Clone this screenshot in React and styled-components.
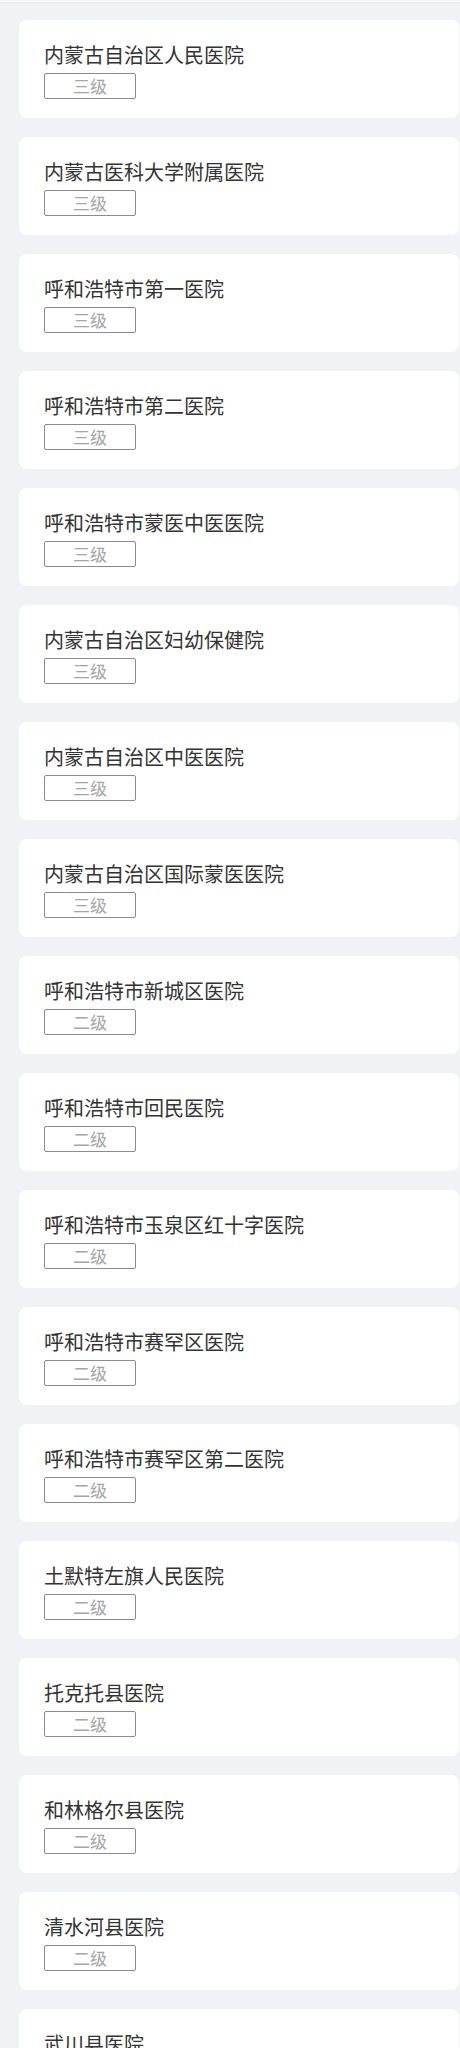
import React from "react";
import styled, { createGlobalStyle } from "styled-components";

const GlobalStyle = createGlobalStyle`
  html, body {
    margin: 0;
    padding: 0;
    background: #eff3f6;
  }
  body {
    font-family: "Noto Sans CJK SC", "Noto Sans", sans-serif;
  }
`;

const Page = styled.div`
  width: 460px;
  min-height: 2048px;
  background: #eff3f6;
  overflow: hidden;
`;

const TopEdge = styled.div`
  height: 2px;
  background: #f6f8fa;
  border-bottom: 1px solid #e8edf1;
`;

const List = styled.div`
  display: flex;
  flex-direction: column;
  gap: 19px;
  padding: 17px 1px 0 19px;
`;

const Card = styled.div`
  background: #ffffff;
  border-radius: 8px;
  padding: 21px 25px 19px 25px;
  height: 98px;
  box-sizing: border-box;
  display: flex;
  flex-direction: column;
  align-items: flex-start;
`;

const Title = styled.div`
  font-size: 20px;
  line-height: 28px;
  color: #333333;
  white-space: nowrap;
`;

const Level = styled.div`
  margin-top: 4px;
  width: 92px;
  height: 26px;
  box-sizing: border-box;
  border: 1px solid #8c8c8c;
  border-radius: 2px;
  display: flex;
  align-items: center;
  justify-content: center;
  font-size: 17px;
  line-height: 24px;
  color: #a6a6a6;
`;

const hospitals = [
  ["内蒙古自治区人民医院", "三级"],
  ["内蒙古医科大学附属医院", "三级"],
  ["呼和浩特市第一医院", "三级"],
  ["呼和浩特市第二医院", "三级"],
  ["呼和浩特市蒙医中医医院", "三级"],
  ["内蒙古自治区妇幼保健院", "三级"],
  ["内蒙古自治区中医医院", "三级"],
  ["内蒙古自治区国际蒙医医院", "三级"],
  ["呼和浩特市新城区医院", "二级"],
  ["呼和浩特市回民医院", "二级"],
  ["呼和浩特市玉泉区红十字医院", "二级"],
  ["呼和浩特市赛罕区医院", "二级"],
  ["呼和浩特市赛罕区第二医院", "二级"],
  ["土默特左旗人民医院", "二级"],
  ["托克托县医院", "二级"],
  ["和林格尔县医院", "二级"],
  ["清水河县医院", "二级"],
  ["武川县医院", "二级"],
];

export default function App() {
  return (
    <Page>
      <GlobalStyle />
      <TopEdge />
      <List>
        {hospitals.map(([name, level]) => (
          <Card key={name}>
            <Title>{name}</Title>
            <Level>{level}</Level>
          </Card>
        ))}
      </List>
    </Page>
  );
}
